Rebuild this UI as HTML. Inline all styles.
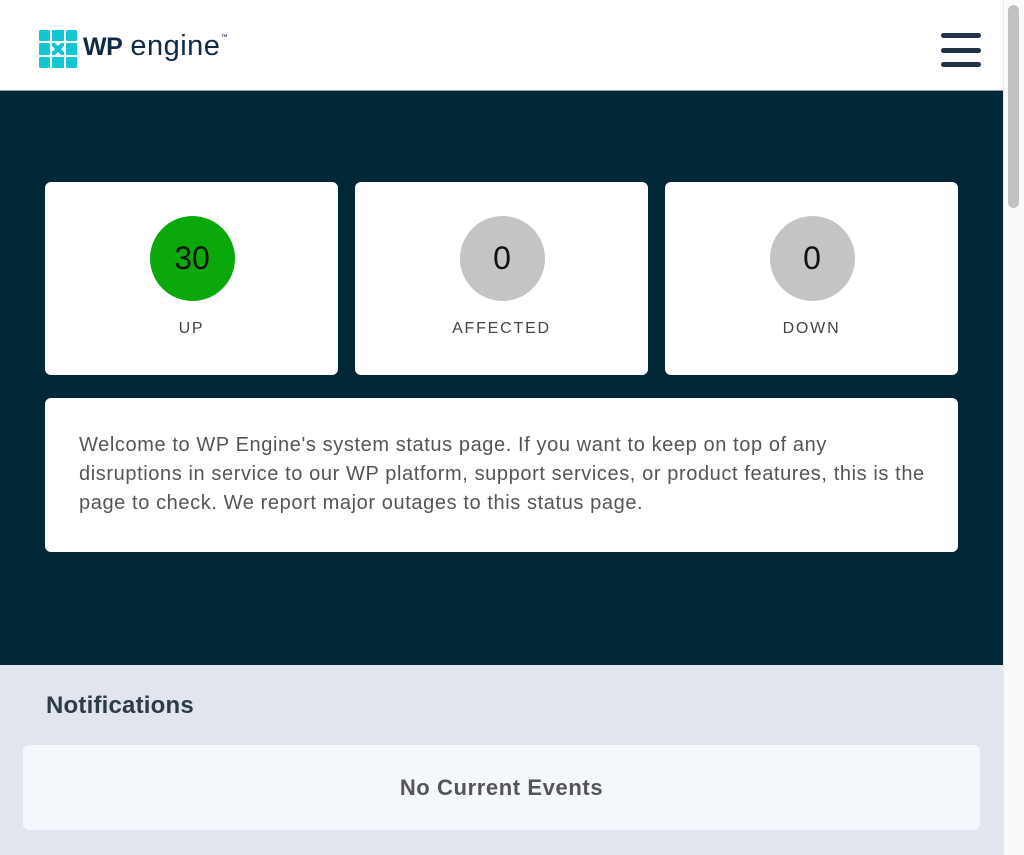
<!DOCTYPE html>
<html><head><meta charset="utf-8"><style>
*{margin:0;padding:0;box-sizing:border-box}
body{width:1024px;height:855px;overflow:hidden;font-family:"Liberation Sans",sans-serif;background:#fff;position:relative}
.hdr{position:absolute;left:0;top:0;width:1003px;height:91px;background:#fff;border-bottom:1px solid #9aa0a4}
.dark{position:absolute;left:0;top:91px;width:1003px;height:574px;background:#022838}
.card{position:absolute;background:#fff;border-radius:6px}
.circ{position:absolute;left:50%;top:34px;width:85px;height:85px;margin-left:-42px;border-radius:50%;background:#c4c4c4;color:#111;font-size:32px;line-height:85px;text-align:center}
.lbl{position:absolute;left:0;right:0;top:138px;text-align:center;font-size:16px;letter-spacing:1.8px;color:#444}
.notif{position:absolute;left:0;top:665px;width:1003px;height:190px;background:#e1e5ee}
.sb{position:absolute;left:1003px;top:0;width:21px;height:855px;background:#fafafa;border-left:1px solid #e8e8e8}
.thumb{position:absolute;left:4px;top:5px;width:11px;height:203px;border-radius:6px;background:#c1c1c1}
.bar{position:absolute;left:941px;width:40px;height:5px;border-radius:3px;background:#1f3246}
</style></head><body>
<div class="hdr">
<svg style="position:absolute;left:39px;top:30px" width="38" height="38" viewBox="0 0 38 38">
<g fill="#13c6d3">
<rect x="0" y="0" width="11" height="11" rx="1.5"/><rect x="13" y="0" width="12" height="11" rx="1"/><rect x="27" y="0" width="11" height="11" rx="1.5"/>
<rect x="0" y="13" width="11" height="12" rx="1"/><rect x="27" y="13" width="11" height="12" rx="1"/>
<rect x="0" y="27" width="11" height="11" rx="1.5"/><rect x="13" y="27" width="12" height="11" rx="1"/><rect x="27" y="27" width="11" height="11" rx="1.5"/>
<path d="M13 13h3l3 3 3-3h3v3l-3 3 3 3v3h-3l-3-3-3 3h-3v-3l3-3-3-3z"/>
<circle cx="19" cy="19" r="2.3"/>
</g></svg>
<div style="position:absolute;left:83px;top:30px;font-size:29px;color:#0e2a47"><b style="font-size:25px;letter-spacing:-0.5px">WP</b> <span style="letter-spacing:0.5px">engine</span><span style="font-size:7px;vertical-align:top;position:relative;top:4px">™</span></div>
<div class="bar" style="top:33px"></div><div class="bar" style="top:48px"></div><div class="bar" style="top:62px"></div>
</div>
<div class="dark">
<div class="card" style="left:45px;top:91px;width:293px;height:193px"><div class="circ" style="background:#0aa80a">30</div><div class="lbl">UP</div></div>
<div class="card" style="left:355px;top:91px;width:293px;height:193px"><div class="circ">0</div><div class="lbl">AFFECTED</div></div>
<div class="card" style="left:665px;top:91px;width:293px;height:193px"><div class="circ">0</div><div class="lbl">DOWN</div></div>
<div class="card" style="left:45px;top:307px;width:913px;height:154px;padding:33px 10px 0 34px;font-size:20px;line-height:29px;color:#555;letter-spacing:0.6px;white-space:nowrap">Welcome to WP Engine's system status page. If you want to keep on top of any<br>disruptions in service to our WP platform, support services, or product features, this is the<br>page to check. We report major outages to this status page.</div>
</div>
<div class="notif">
<div style="position:absolute;left:46px;top:27px;font-size:24px;font-weight:bold;color:#2d3a48;letter-spacing:0.2px">Notifications</div>
<div style="position:absolute;left:23px;top:80px;width:957px;height:85px;background:#f4f7fb;border-radius:6px;text-align:center;line-height:85px;font-size:22px;font-weight:bold;color:#555;letter-spacing:0.6px">No Current Events</div>
</div>
<div class="sb"><div class="thumb"></div></div>
</body></html>
